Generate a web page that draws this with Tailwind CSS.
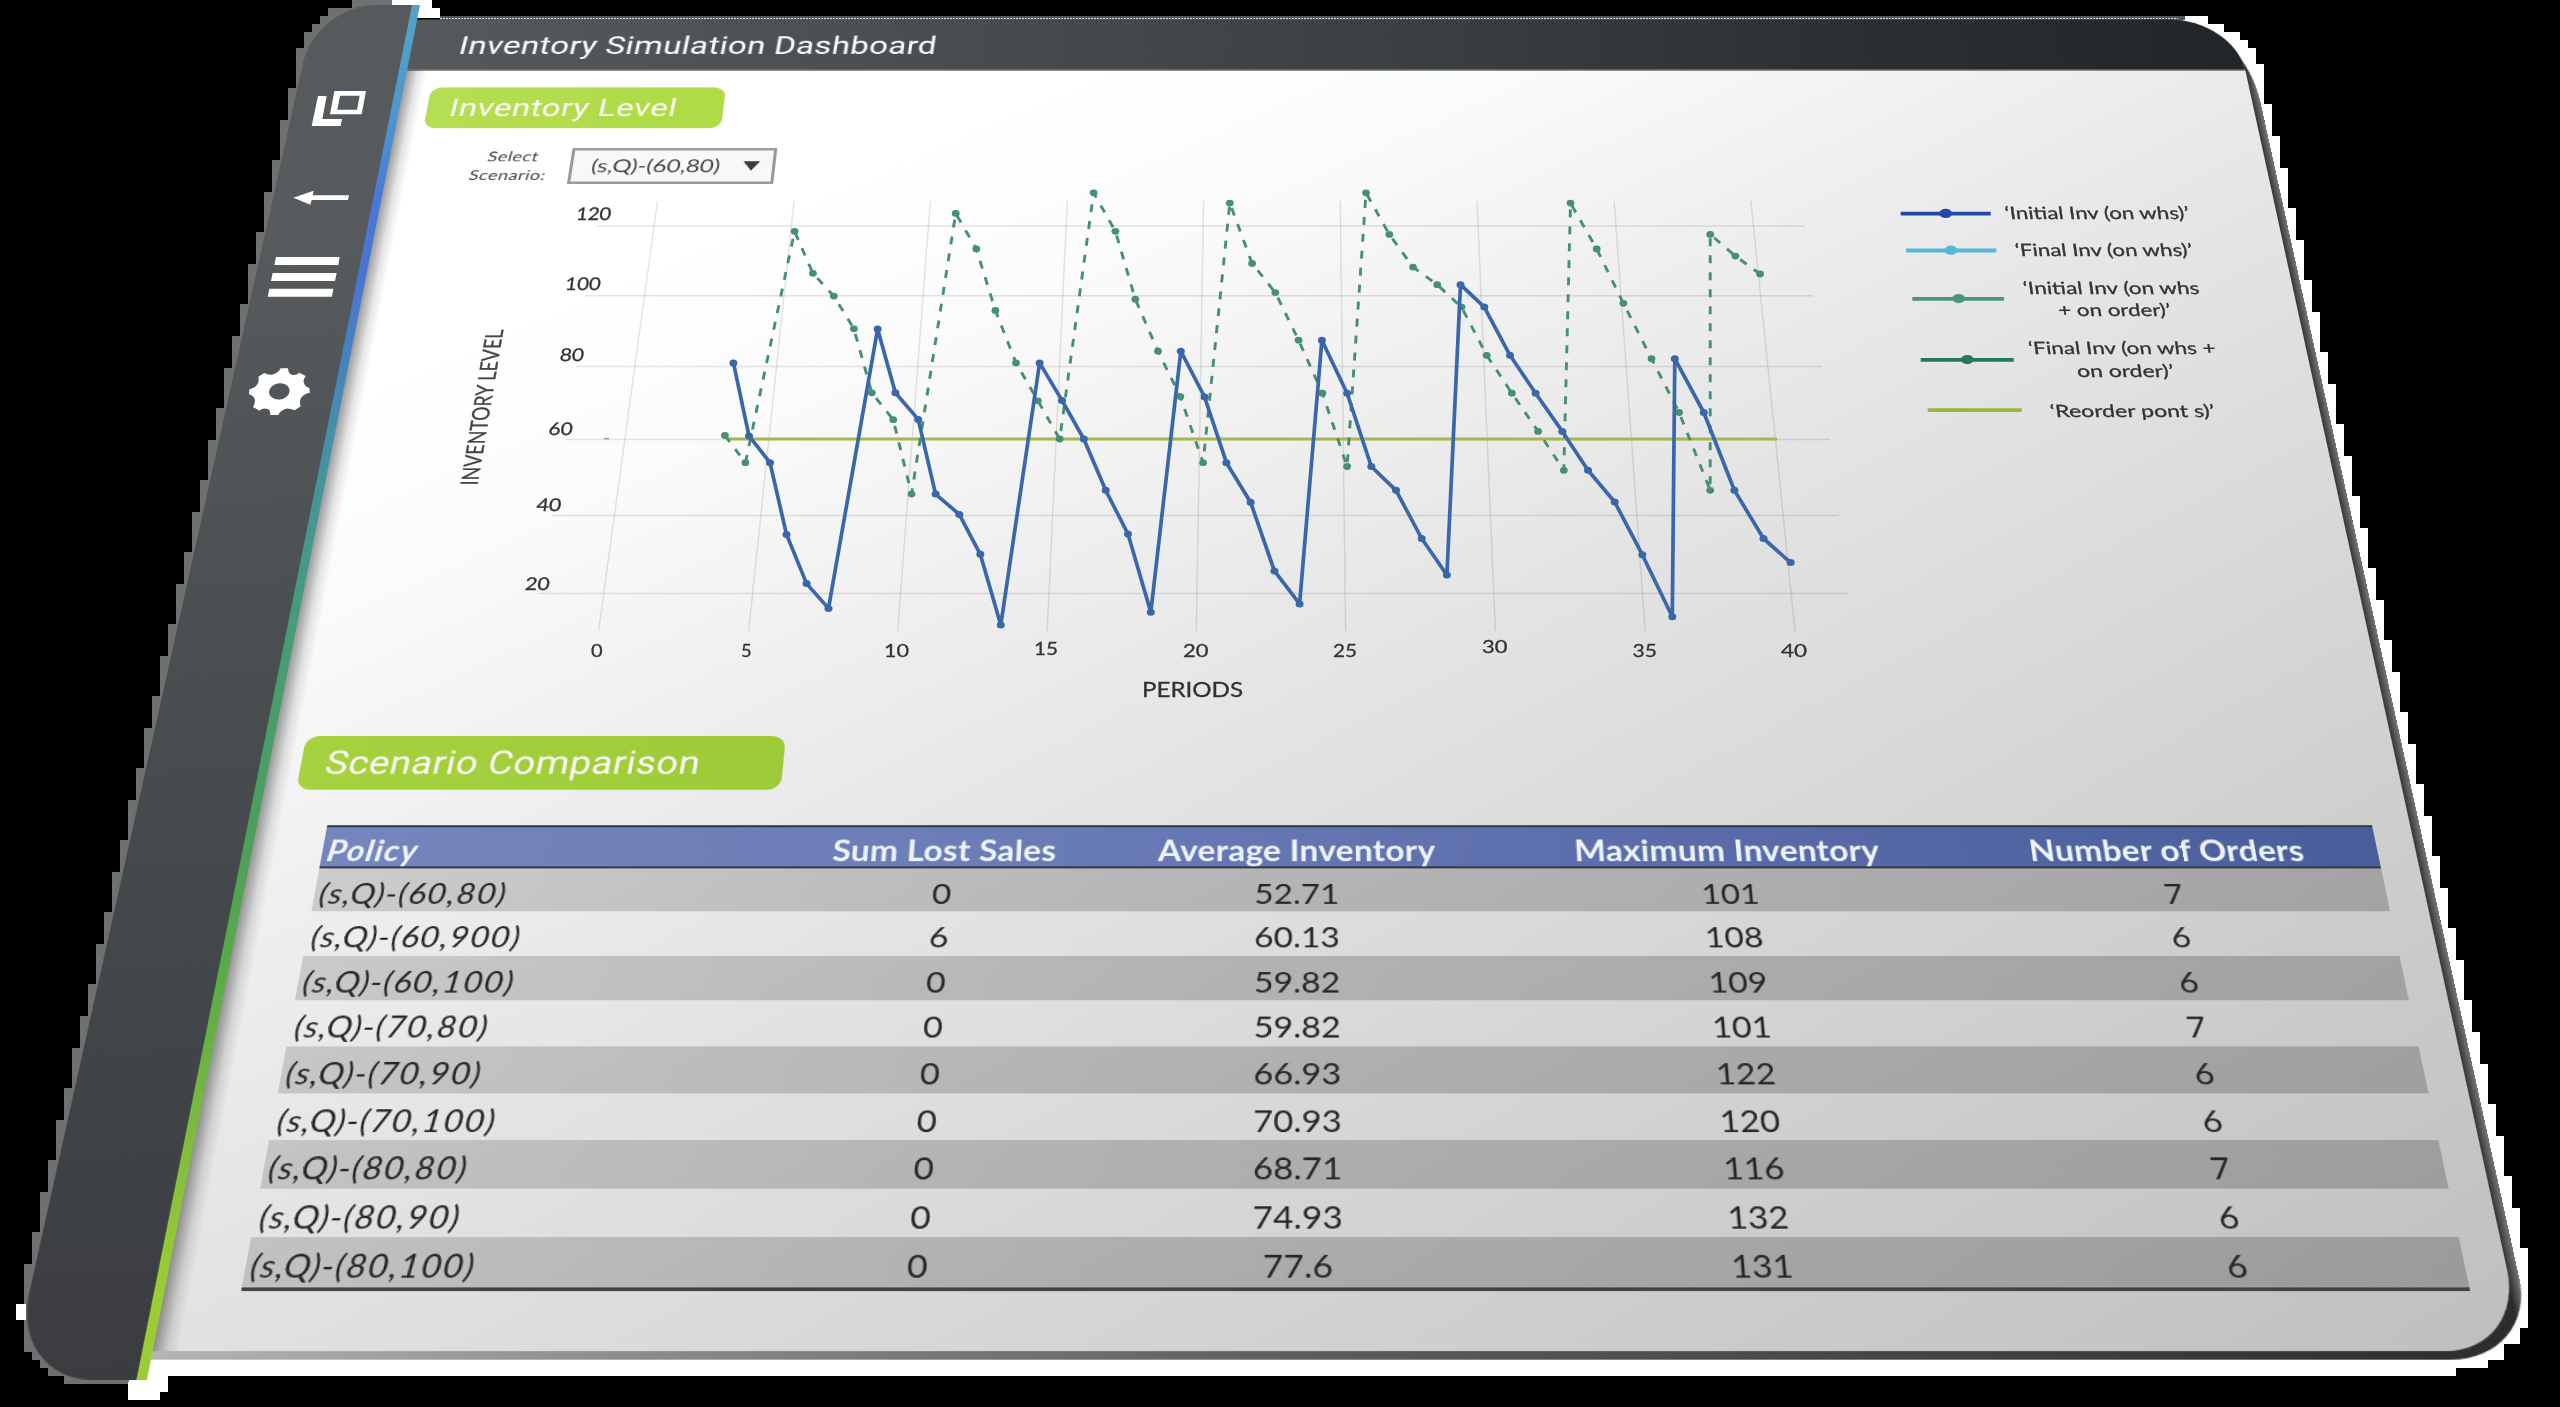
<!DOCTYPE html>
<html lang="en">
<head>
<meta charset="utf-8">
<title>Inventory Simulation Dashboard</title>
<script src="https://cdn.jsdelivr.net/npm/@tailwindcss/browser@4"></script>
</head>
<body class="bg-black">
<div class="relative w-[2560px] h-[1407px] overflow-hidden bg-black font-[Lato,sans-serif]">

  <!-- stepped rim behind the tablet -->
  <svg class="absolute inset-0" width="2560" height="1407" viewBox="0 0 2560 1407" shape-rendering="crispEdges">
    <path fill="#fff" d="M2176 16H2208V24H2224V32H2240V40H2248V48H2256V64H2264V104H2272V136H2280V168H2288V208H2296V240H2304V280H2312V312H2320V352H2328V384H2336V424H2344V456H2352V496H2360V528H2368V568H2376V600H2384V640H2392V672H2400V712H2408V744H2416V784H2424V816H2432V856H2440V888H2448V928H2456V960H2464V1000H2472V1032H2480V1064H2488V1104H2496V1136H2504V1176H2512V1208H2520V1248H2528V1328H2520V1344H2504V1360H2488V1368H2456V1376H168V1392H160V1400H128V1300H2176Z"/>
    <path fill="#6f7171" d="M352 0V8H328V16H320V24H312V32H304V48H296V88H288V120H280V160H272V192H264V232H256V264H248V304H240V336H232V368H224V408H216V440H208V480H200V512H192V552H184V584H176V624H168V656H160V696H152V728H144V768H136V800H128V840H120V872H112V912H104V944H96V984H88V1016H80V1048H72V1088H64V1120H56V1160H48V1192H40V1232H32V1264H24V1304H24V1352H32V1360H40V1368H48V1376H64V1384H128L150 1300L400 20V0Z"/>
    <path fill="#fff" d="M392 0H432V8H440V18H392ZM16 1304H26V1320H16Z"/>
    <path fill="#555" d="M440 16H2185V20H440Z"/>
    <path stroke="#ddd" stroke-dasharray="2 1" d="M440 18.5H2178"/>
  </svg>

  <!-- tilted plane holding the flat dashboard -->
  <div class="absolute left-0 top-0 w-[2560px] h-[1454px] origin-top-left flex items-start pl-[317px] [transform:matrix3d(1,0,0,0,-0.212848,0.72,0,-0.000165899,0,0,1,0,0,0,0,1)]">
    <!-- tablet thickness -->
    <div class="absolute left-[421px] top-[50px] w-[1817px] h-[1388px] rounded-br-[66px] [border-top-right-radius:40px_90px] bg-[linear-gradient(90deg,#b4b4b4,#8c8c8c_20%,#5a5a5a_50%,#3a3a3a_85%,#2c2c2c_99.5%,#777)]"></div>

    <aside class="relative z-10 mt-[7px] w-[96px] h-[1447px] shrink-0 bg-[linear-gradient(175deg,#565a5c,#575b5d_20%,#4b5052_50%,#42474a_75%,#3b3c40)] [border-top-left-radius:60px_78px] [border-bottom-left-radius:62px_70px]"></aside>
    <div class="relative z-10 mt-[7px] w-2 h-[1447px] shrink-0 bg-[linear-gradient(180deg,#53a4c6,#4f97cc_10%,#4a77d6_18%,#4a74d4_25%,#4691a6_38%,#479c78_52%,#4c9e5c_66%,#5aab48_76%,#84bf3b_88%,#9ccc33_95%,#9ccc33)]"></div>

    <main class="relative mt-[27px] w-[1809px] h-[1404px] shrink-0 overflow-hidden [border-top-right-radius:64px_70px] [border-bottom-right-radius:60px_66px] bg-[linear-gradient(149deg,#fff_19%,#fbfbfb_29%,#ededed_44%,#e3e3e3_55%,#d2d2d2_76%,#bfbfbf)]">
      <div class="absolute left-0 top-[69px] w-[20px] h-[1335px] bg-[linear-gradient(90deg,rgba(0,0,0,0.38),rgba(0,0,0,0.1)_55%,transparent)]"></div>
      <header class="h-[70px] pl-[47px] pt-[5px] flex items-center border-b-2 border-[#8a8c8d] bg-[linear-gradient(90deg,#55595b,#4b4f51_25%,#3a3f41_55%,#2b2f31_80%,#232629)]">
        <h1 class="font-[Roboto,sans-serif] text-[32.5px] leading-none tracking-[0.4px] text-white whitespace-nowrap -skew-x-3">Inventory Simulation Dashboard</h1>
      </header>

      <section class="h-[777px] pt-[22px]">
        <h2 class="ml-[27px] w-[289px] h-[54px] rounded-[12px] pl-[22px] flex items-center bg-[linear-gradient(90deg,#b5de52,#afdb45)] font-[Roboto,sans-serif] text-[32px] leading-none tracking-[0.6px] whitespace-nowrap text-white"><span class="inline-block -skew-x-3">Inventory Level</span></h2>
        <div class="mt-[24px] ml-[61px] flex items-center text-[#444]">
          <div class="w-[114px] text-center text-[17.5px] leading-[24px] tracking-[0.4px] pt-[1px]"><span class="inline-block -skew-x-6">Select<br>Scenario:</span></div>
          <div class="w-[198px] h-[46px] border-[3px] border-[#9a9a9a] bg-[#f8f8f8] pl-[18px] pr-[12px] flex items-center justify-between text-[23px] leading-none">
            <span class="whitespace-nowrap inline-block -skew-x-3">(s,Q)-(60,80)</span>
            <svg width="16" height="12" viewBox="0 0 16 12"><path d="M0 0H16L8 12Z" fill="#3c3c3c"/></svg>
          </div>
        </div>
      </section>

      <section>
        <h2 class="ml-[27px] w-[410px] h-[54px] rounded-[12px] pl-[21px] flex items-center bg-[linear-gradient(90deg,#a6d23f,#9dca37)] font-[Roboto,sans-serif] text-[32.5px] leading-none tracking-[0.4px] whitespace-nowrap text-white"><span class="inline-block -skew-x-3">Scenario Comparison</span></h2>
        <div id="table" class="mt-[35px] ml-[59px] w-[1718px] text-[27.5px] leading-none border-b-3 border-[#3f4142]"></div>
      </section>
    </main>
  </div>

  <!-- sidebar icons -->
  <svg class="absolute left-[220px] top-[60px]" width="200" height="380" viewBox="0 0 600 1140" fill="#fff">
    <path fill-rule="evenodd" d="M343 93H438L425 163H330ZM360 107L352 149H411L419 107Z"/>
    <path d="M294 108H320L307 177H366L362 198H275Z"/>
    <path d="M220 413L281 392L278 406H387L384 420H275L271 434Z"/>
    <path d="M168 591H359L355 615H163ZM158 639H350L345 663H153ZM148 686H340L336 710H143Z"/>
    <path fill-rule="evenodd" d="M182 925H204Q205 943 216 944Q228 947 238 938L257 948Q248 960 252 970Q256 981 268 984L270 998Q254 1001 247 1009Q236 1020 242 1039L224 1051Q209 1045 199 1046Q181 1050 175 1065H151Q151 1049 142 1047Q128 1043 119 1052L99 1041Q107 1028 104 1017Q100 1006 87 1003L88 988Q103 985 110 976Q119 965 115 950L133 939Q144 946 156 944Q173 941 182 925ZM209 991A31 24 -12 1 0 147 997A31 24 -12 1 0 209 991Z"/>
  </svg>

  <!-- chart and legend -->
  <svg id="chart" class="absolute inset-0" width="2560" height="1407" viewBox="0 0 2560 1407" fill="none" font-family="Lato, sans-serif"></svg>
</div>

<script>
const rows = [
  ['(s,Q)-(60,80)','0','52.71','101','7'],
  ['(s,Q)-(60,900)','6','60.13','108','6'],
  ['(s,Q)-(60,100)','0','59.82','109','6'],
  ['(s,Q)-(70,80)','0','59.82','101','7'],
  ['(s,Q)-(70,90)','0','66.93','122','6'],
  ['(s,Q)-(70,100)','0','70.93','120','6'],
  ['(s,Q)-(80,80)','0','68.71','116','7'],
  ['(s,Q)-(80,90)','0','74.93','132','6'],
  ['(s,Q)-(80,100)','0','77.6','131','6'],
];
const grid = 'grid grid-cols-[394px_252px_337px_382px_353px] items-center h-[41.6px] pt-[6px] text-center ';
const line = (cells, cls) => `<div class="${grid}${cls}">` + cells.map((c, i) =>
  `<div class="${i ? 'whitespace-nowrap' : 'whitespace-nowrap text-left pl-[4px] italic tracking-[1px]'}">${c}</div>`).join('') + '</div>';
document.getElementById('table').innerHTML =
  line(['Policy','Sum Lost Sales','Average Inventory','Maximum Inventory','Number of Orders'],
    'border-y-2 border-[#33384a] bg-[linear-gradient(90deg,#7585bd,#6a7cb6_35%,#5b6cab_65%,#485e9b)] text-[#eef3fa] font-bold text-[28px] tracking-[0.2px]') +
  rows.map((r, i) => line(r, (i % 2 ? '' : 'bg-[linear-gradient(90deg,rgba(0,0,0,0.15),rgba(0,0,0,0.19)_40%,rgba(0,0,0,0.2))] ') + 'text-[#262626]')).join('');

let out = '';
const seg = (x1, y1, x2, y2, c, w) => out += `<path d="M${x1} ${y1}L${x2} ${y2}" stroke="${c}" stroke-width="${w}"/>`;
const label = (t, x1, x2, y, size, skew) =>
  out += `<text transform="translate(${x1} ${y}) skewX(${skew})" font-size="${size}" fill="#333" stroke="#333" stroke-width=".3" textLength="${x2 - x1}" lengthAdjust="spacingAndGlyphs">${t}</text>`;

// grid
[[226,596,1805],[295.7,585,1813],[366.6,576,1822],[439.6,565,1830],[515.4,552,1839],[593.5,540,1848]]
  .forEach(([y, a, b]) => seg(a, y, b, y, 'rgba(0,0,0,0.1)', 1.5));
[[657.5,598.6],[794,748.6],[930.3,897.7],[1067.3,1047.2],[1203.6,1196.3],[1340.3,1345.6],[1477,1495.4],[1614.2,1645.2],[1750.9,1795]]
  .forEach(([a, b]) => seg(a, 201, b, 631, 'rgba(0,0,0,0.1)', 1.5));
seg(604, 438.6, 609, 438.6, '#999', 1.5);

// the left and right halves of the plot use different horizontal steps
const L = ([u, v]) => [420 + u / 2.24, 160.4 + v / 2.904];
const R = ([u, v]) => [1080 + u / 2.063, 160.4 + v / 2.904];
const draw = (pts, c, w, r, dash) => {
  out += `<polyline points="${pts.map(p => p.map(n => n.toFixed(1)).join()).join(' ')}" stroke="${c}" stroke-width="${w}" stroke-linejoin="round" ${dash ? 'stroke-dasharray="8 9"' : ''}/>`;
  pts.forEach(([x, y]) => out += `<ellipse cx="${x.toFixed(1)}" cy="${y.toFixed(1)}" rx="${r}" ry="${r - .5}" fill="${c}"/>`);
};
seg(727, 439, 1777, 439, '#a5b84c', 2.8);
draw([
  ...[[683,799],[729,878],[839,206],[880,328],[927,394],[972,489],[1012,675],[1060,753],[1101,969],[1200,154],[1246,257],[1289,436],[1335,588],[1384,698],[1433,809]].map(L),
  ...[[28,94],[73,206],[114,403],[161,554],[207,686],[254,878],[309,124],[355,299],[403,384],[451,522],[500,676],[551,889],[590,94],[638,215],[687,310],[737,361],[787,426],[839,566],[891,676],[945,787],[998,900],[1012,124],[1066,257],[1121,415],[1179,576],[1236,732],[1300,958],[1300,215],[1352,278],[1403,330]].map(R)
], '#459073', 2.9, 3.9, true);
draw([
  ...[[702,588],[737,800],[784,878],[821,1086],[866,1229],[915,1301],[1025,490],[1065,675],[1116,752],[1155,969],[1208,1028],[1255,1144],[1301,1349],[1388,588],[1438,697],[1487,809]].map(L),
  ...[[53,958],[99,1085],[146,1312],[208,554],[257,687],[302,878],[352,993],[401,1192],[453,1288],[499,522],[551,676],[601,889],[652,958],[705,1098],[757,1204],[785,361],[834,426],[887,566],[940,676],[995,787],[1048,900],[1103,992],[1160,1145],[1222,1325],[1227,576],[1287,732],[1350,958],[1410,1098],[1466,1168]].map(R)
], '#3a66aa', 3.7, 4, false);

// axes
[['120',575.4,610.6,219.5],['100',564.6,600,289.5],['80',559.3,583.4,361],['60',548,572,435],['40',536,560.6,510.5],['20',524.5,549,589.5]]
  .forEach(([t, a, b, y]) => label(t, a, b, y, 17.5, -7));
[['0',591,602.6,656.5],['5',741,751.7,656.5],['10',884,909,656.5],['15',1034,1058,655],['20',1183,1208.5,656.5],['25',1333,1357,656.5],['30',1482,1507.5,653],['35',1632.6,1657,656.5],['40',1781,1807,656.5]]
  .forEach(([t, a, b, y]) => label(t, a, b, y, 18, 0));
label('PERIODS', 1142, 1243, 696.5, 20.5, 0);
out += '<text transform="matrix(.164 -.9865 1 0 477.6 485.4)" font-size="24" fill="#444" stroke="#444" stroke-width=".3" textLength="158" lengthAdjust="spacingAndGlyphs">INVENTORY LEVEL</text>';

// legend
[[1900.7,1990.7,213.7,1945.7,'#2348a8'],[1906,1996.3,250.5,1951,'#56b7d8'],[1912.3,2004,298.9,1958.7,'#4c9580'],[1920.7,2013.7,359.9,1967.3,'#25795c'],[1927.7,2021.7,410.2,0,'#96b93c']]
  .forEach(([a, b, y, d, c]) => { seg(a, y, b, y, c, 3.8); if (d) out += `<ellipse cx="${d}" cy="${y - .3}" rx="6.4" ry="4.6" fill="${c}"/>`; });
[['‘Initial Inv (on whs)’',2005.7,2189.7,219.3],['‘Final Inv (on whs)’',2016,2193,256.2],['‘Initial Inv (on whs',2024,2200,294],['+ on order)’',2059,2171.3,316],['‘Final Inv (on whs +',2029.3,2216.3,354.2],['on order)’',2077.7,2174.3,377],['‘Reorder pont s)’',2051,2215.3,416.6]]
  .forEach(([t, a, b, y]) => label(t, a, b, y, 17, 8));
document.getElementById('chart').innerHTML = out;
</script>
</body>
</html>
